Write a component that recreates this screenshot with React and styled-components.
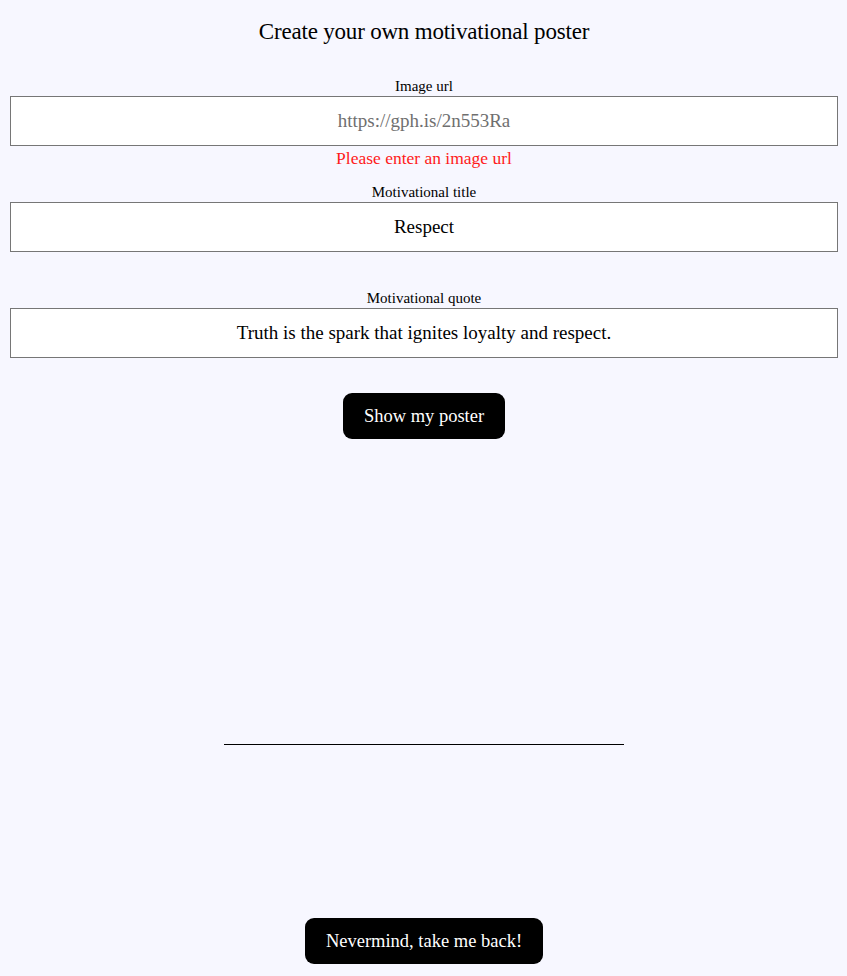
import styled, { createGlobalStyle } from "styled-components";

const GlobalStyle = createGlobalStyle`
  body {
    margin: 0;
    background-color: #f7f7ff;
    font-family: "Liberation Serif", "Times New Roman", serif;
    color: #000;
  }
`;

const Page = styled.div`
  display: flex;
  flex-direction: column;
  align-items: center;
  padding: 0 9px 0 10px;
  box-sizing: border-box;
  min-height: 976px;
`;

const Title = styled.h1`
  margin: 17px 0 0;
  font-size: 23px;
  line-height: 30px;
  font-weight: 400;
  letter-spacing: -0.2px;
`;

const Form = styled.form`
  width: 100%;
  display: flex;
  flex-direction: column;
  align-items: center;
  margin-top: 29px;
`;

const Field = styled.div`
  width: 100%;
  display: flex;
  flex-direction: column;
  align-items: center;
  margin-bottom: 12px;
`;

const Label = styled.label`
  font-size: 15px;
  line-height: 20px;
`;

const Input = styled.input`
  width: 100%;
  height: 50px;
  box-sizing: border-box;
  border: 1px solid #767676;
  background: #fff;
  text-align: center;
  font-family: inherit;
  font-size: 19px;
  color: #000;
  outline: none;

  &::placeholder {
    color: #6f6f6f;
  }
`;

const Error = styled.div`
  height: 24px;
  line-height: 24px;
  font-size: 17.5px;
  color: #ff1a1a;
`;

const Button = styled.button`
  height: 46px;
  padding: 0 21px;
  border: none;
  border-radius: 9px;
  background: #000;
  color: #fff;
  font-family: inherit;
  font-size: 18.5px;
  cursor: pointer;
  margin-top: ${({ $top }) => $top || "0"};
`;

const Poster = styled.div`
  width: 400px;
  display: flex;
  flex-direction: column;
  align-items: center;
  margin-top: 20px;
`;

const PosterImage = styled.div`
  width: 100%;
  height: 285px;
`;

const PosterTitle = styled.div`
  width: 100%;
  border-bottom: 1px solid #000;
`;

const PosterQuote = styled.div`
  height: 173px;
`;

export default function App() {
  return (
    <>
      <GlobalStyle />
      <Page>
        <Title>Create your own motivational poster</Title>
        <Form onSubmit={(e) => e.preventDefault()}>
          <Field>
            <Label htmlFor="url">Image url</Label>
            <Input id="url" placeholder="https://gph.is/2n553Ra" />
            <Error>Please enter an image url</Error>
          </Field>
          <Field>
            <Label htmlFor="title">Motivational title</Label>
            <Input id="title" defaultValue="Respect" />
            <Error />
          </Field>
          <Field>
            <Label htmlFor="quote">Motivational quote</Label>
            <Input
              id="quote"
              defaultValue="Truth is the spark that ignites loyalty and respect."
            />
            <Error />
          </Field>
          <Button type="submit" $top="-1px">Show my poster</Button>
        </Form>
        <Poster>
          <PosterImage />
          <PosterTitle />
          <PosterQuote />
        </Poster>
        <Button type="button">Nevermind, take me back!</Button>
      </Page>
    </>
  );
}
